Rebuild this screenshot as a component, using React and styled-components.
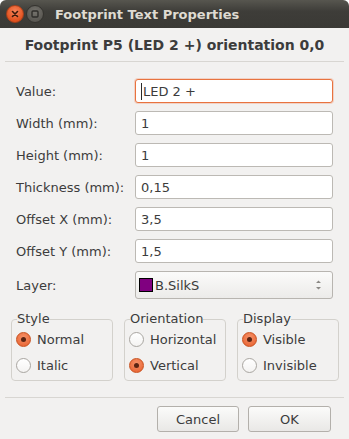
import React from "react";
import styled, { createGlobalStyle } from "styled-components";

const GlobalStyle = createGlobalStyle`
  html, body {
    margin: 0;
    padding: 0;
    background: #ffffff;
  }
  * {
    box-sizing: border-box;
  }
`;

const Window = styled.div`
  width: 349px;
  height: 439px;
  background: #f2f1f0;
  color: #3c3c3c;
  font-family: "DejaVu Sans", "Liberation Sans", sans-serif;
  font-size: 13px;
  border-radius: 6px 6px 0 0;
  overflow: hidden;
  display: flex;
  flex-direction: column;
`;

const TitleBar = styled.div`
  height: 28px;
  flex: none;
  display: flex;
  align-items: center;
  padding-left: 6px;
  gap: 2px;
  background: linear-gradient(#57564f, #3e3d39 40%, #3a3935);
`;

const WinButton = styled.div`
  width: 18px;
  height: 18px;
  border-radius: 50%;
  display: flex;
  align-items: center;
  justify-content: center;
  background: ${({ $close }) =>
    $close
      ? "radial-gradient(circle at 50% 35%, #f8845a, #e2521f 70%)"
      : "radial-gradient(circle at 50% 35%, #75736d, #5a5853 70%)"};
  border: 1px solid ${({ $close }) => ($close ? "#a8401c" : "#34332f")};
`;

const TitleText = styled.div`
  margin-left: 9px;
  font-weight: bold;
  color: #dfdbd2;
  font-size: 13px;
`;

const Header = styled.div`
  height: 33px;
  flex: none;
  display: flex;
  align-items: center;
  justify-content: center;
  font-weight: bold;
  font-size: 14px;
  color: #3c3c3c;
`;

const Divider = styled.div`
  height: 1px;
  margin: 0 5px;
  background: #d8d6d2;
  flex: none;
`;

const Form = styled.div`
  display: grid;
  grid-template-columns: 119px 198px;
  row-gap: 8px;
  padding: 17px 0 0 16px;
  align-items: center;
`;

const Label = styled.div`
  white-space: nowrap;
`;

const Field = styled.div`
  height: 24px;
  display: flex;
  align-items: center;
  padding-left: 5px;
  background: #ffffff;
  border: 1px solid ${({ $focus }) => ($focus ? "#e8733f" : "#bcb9b4")};
  border-radius: 3px;
  box-shadow: ${({ $focus }) =>
    $focus ? "0 0 0 1px rgba(240, 119, 70, 0.25)" : "none"};
  color: #3c3c3c;
`;

const Caret = styled.span`
  width: 1px;
  height: 17px;
  background: #2a2a2a;
  margin-right: 1px;
`;

const Combo = styled.div`
  height: 28px;
  display: flex;
  align-items: center;
  padding: 0 10px 0 3px;
  background: linear-gradient(#fbfbfa, #ecebe9);
  border: 1px solid #b8b5b0;
  border-radius: 3px;
`;

const Swatch = styled.span`
  width: 14px;
  height: 14px;
  background: ${({ $color }) => $color};
  border: 1px solid #000;
  margin-right: 2px;
`;

const ComboText = styled.span`
  flex: 1;
`;

const Groups = styled.div`
  display: flex;
  gap: 11px;
  padding: 13px 0 0 11px;
`;

const Group = styled.fieldset`
  width: 102px;
  height: 69px;
  margin: 0;
  padding: 6px 0 0 4px;
  border: 1px solid #d3d1cc;
  border-radius: 4px;
  display: flex;
  flex-direction: column;
  gap: 11px;
`;

const Legend = styled.legend`
  padding: 0;
  margin-left: 1px;
  line-height: 14px;
  color: #3c3c3c;
`;

const RadioRow = styled.div`
  display: flex;
  align-items: center;
  gap: 6px;
  height: 15px;
  white-space: nowrap;
`;

const Radio = styled.span`
  width: 15px;
  height: 15px;
  flex: none;
  border-radius: 50%;
  display: flex;
  align-items: center;
  justify-content: center;
  border: 1px solid ${({ $on }) => ($on ? "#c8511f" : "#a9a6a1")};
  background: ${({ $on }) =>
    $on
      ? "radial-gradient(circle at 50% 35%, #f7936a, #ea6a3a 75%)"
      : "linear-gradient(#ffffff, #f4f3f2)"};
  &::after {
    content: "";
    width: 5px;
    height: 5px;
    border-radius: 50%;
    background: #5b2412;
    display: ${({ $on }) => ($on ? "block" : "none")};
  }
`;

const Footer = styled.div`
  margin-top: 16px;
`;

const Buttons = styled.div`
  display: flex;
  justify-content: flex-end;
  gap: 9px;
  padding: 8px 18px 0 0;
`;

const Button = styled.div`
  width: ${({ $w }) => $w}px;
  height: 26px;
  display: flex;
  align-items: center;
  justify-content: center;
  background: linear-gradient(#fbfbfa, #e9e8e6);
  border: 1px solid #b3b0ab;
  border-radius: 3px;
  color: #3c3c3c;
`;

const fields = [
  { label: "Value:", value: "LED 2 +", focus: true },
  { label: "Width (mm):", value: "1" },
  { label: "Height (mm):", value: "1" },
  { label: "Thickness (mm):", value: "0,15" },
  { label: "Offset X (mm):", value: "3,5" },
  { label: "Offset Y (mm):", value: "1,5" },
];

const groups = [
  { title: "Style", options: ["Normal", "Italic"], on: 0 },
  { title: "Orientation", options: ["Horizontal", "Vertical"], on: 1 },
  { title: "Display", options: ["Visible", "Invisible"], on: 0 },
];

const App = () => {
  return (
    <>
      <GlobalStyle />
      <Window>
        <TitleBar>
          <WinButton $close>
            <svg width="8" height="8" viewBox="0 0 8 8">
              <path d="M1.5 1.5 L6.5 6.5 M6.5 1.5 L1.5 6.5" stroke="#3b1a0c" strokeWidth="1.6" strokeLinecap="round" />
            </svg>
          </WinButton>
          <WinButton>
            <svg width="8" height="8" viewBox="0 0 8 8">
              <rect x="1" y="1" width="6" height="6" rx="1" fill="none" stroke="#2e2d2a" strokeWidth="1.4" />
            </svg>
          </WinButton>
          <TitleText>Footprint Text Properties</TitleText>
        </TitleBar>
        <Header>Footprint P5 (LED 2 +) orientation 0,0</Header>
        <Divider />
        <Form>
          {fields.map((f) => (
            <React.Fragment key={f.label}>
              <Label>{f.label}</Label>
              <Field $focus={f.focus}>
                {f.focus && <Caret />}
                {f.value}
              </Field>
            </React.Fragment>
          ))}
          <Label>Layer:</Label>
          <Combo>
            <Swatch $color="#800080" />
            <ComboText>B.SilkS</ComboText>
            <svg width="7" height="12" viewBox="0 0 7 12">
              <path d="M1 4 L3.5 1.5 L6 4 Z M1 8 L3.5 10.5 L6 8 Z" fill="#8a8884" />
            </svg>
          </Combo>
        </Form>
        <Groups>
          {groups.map((g) => (
            <Group key={g.title}>
              <Legend>{g.title}</Legend>
              {g.options.map((o, i) => (
                <RadioRow key={o}>
                  <Radio $on={i === g.on} />
                  {o}
                </RadioRow>
              ))}
            </Group>
          ))}
        </Groups>
        <Footer>
          <Divider />
          <Buttons>
            <Button $w={82}>Cancel</Button>
            <Button $w={83}>OK</Button>
          </Buttons>
        </Footer>
      </Window>
    </>
  );
};

export default App;
